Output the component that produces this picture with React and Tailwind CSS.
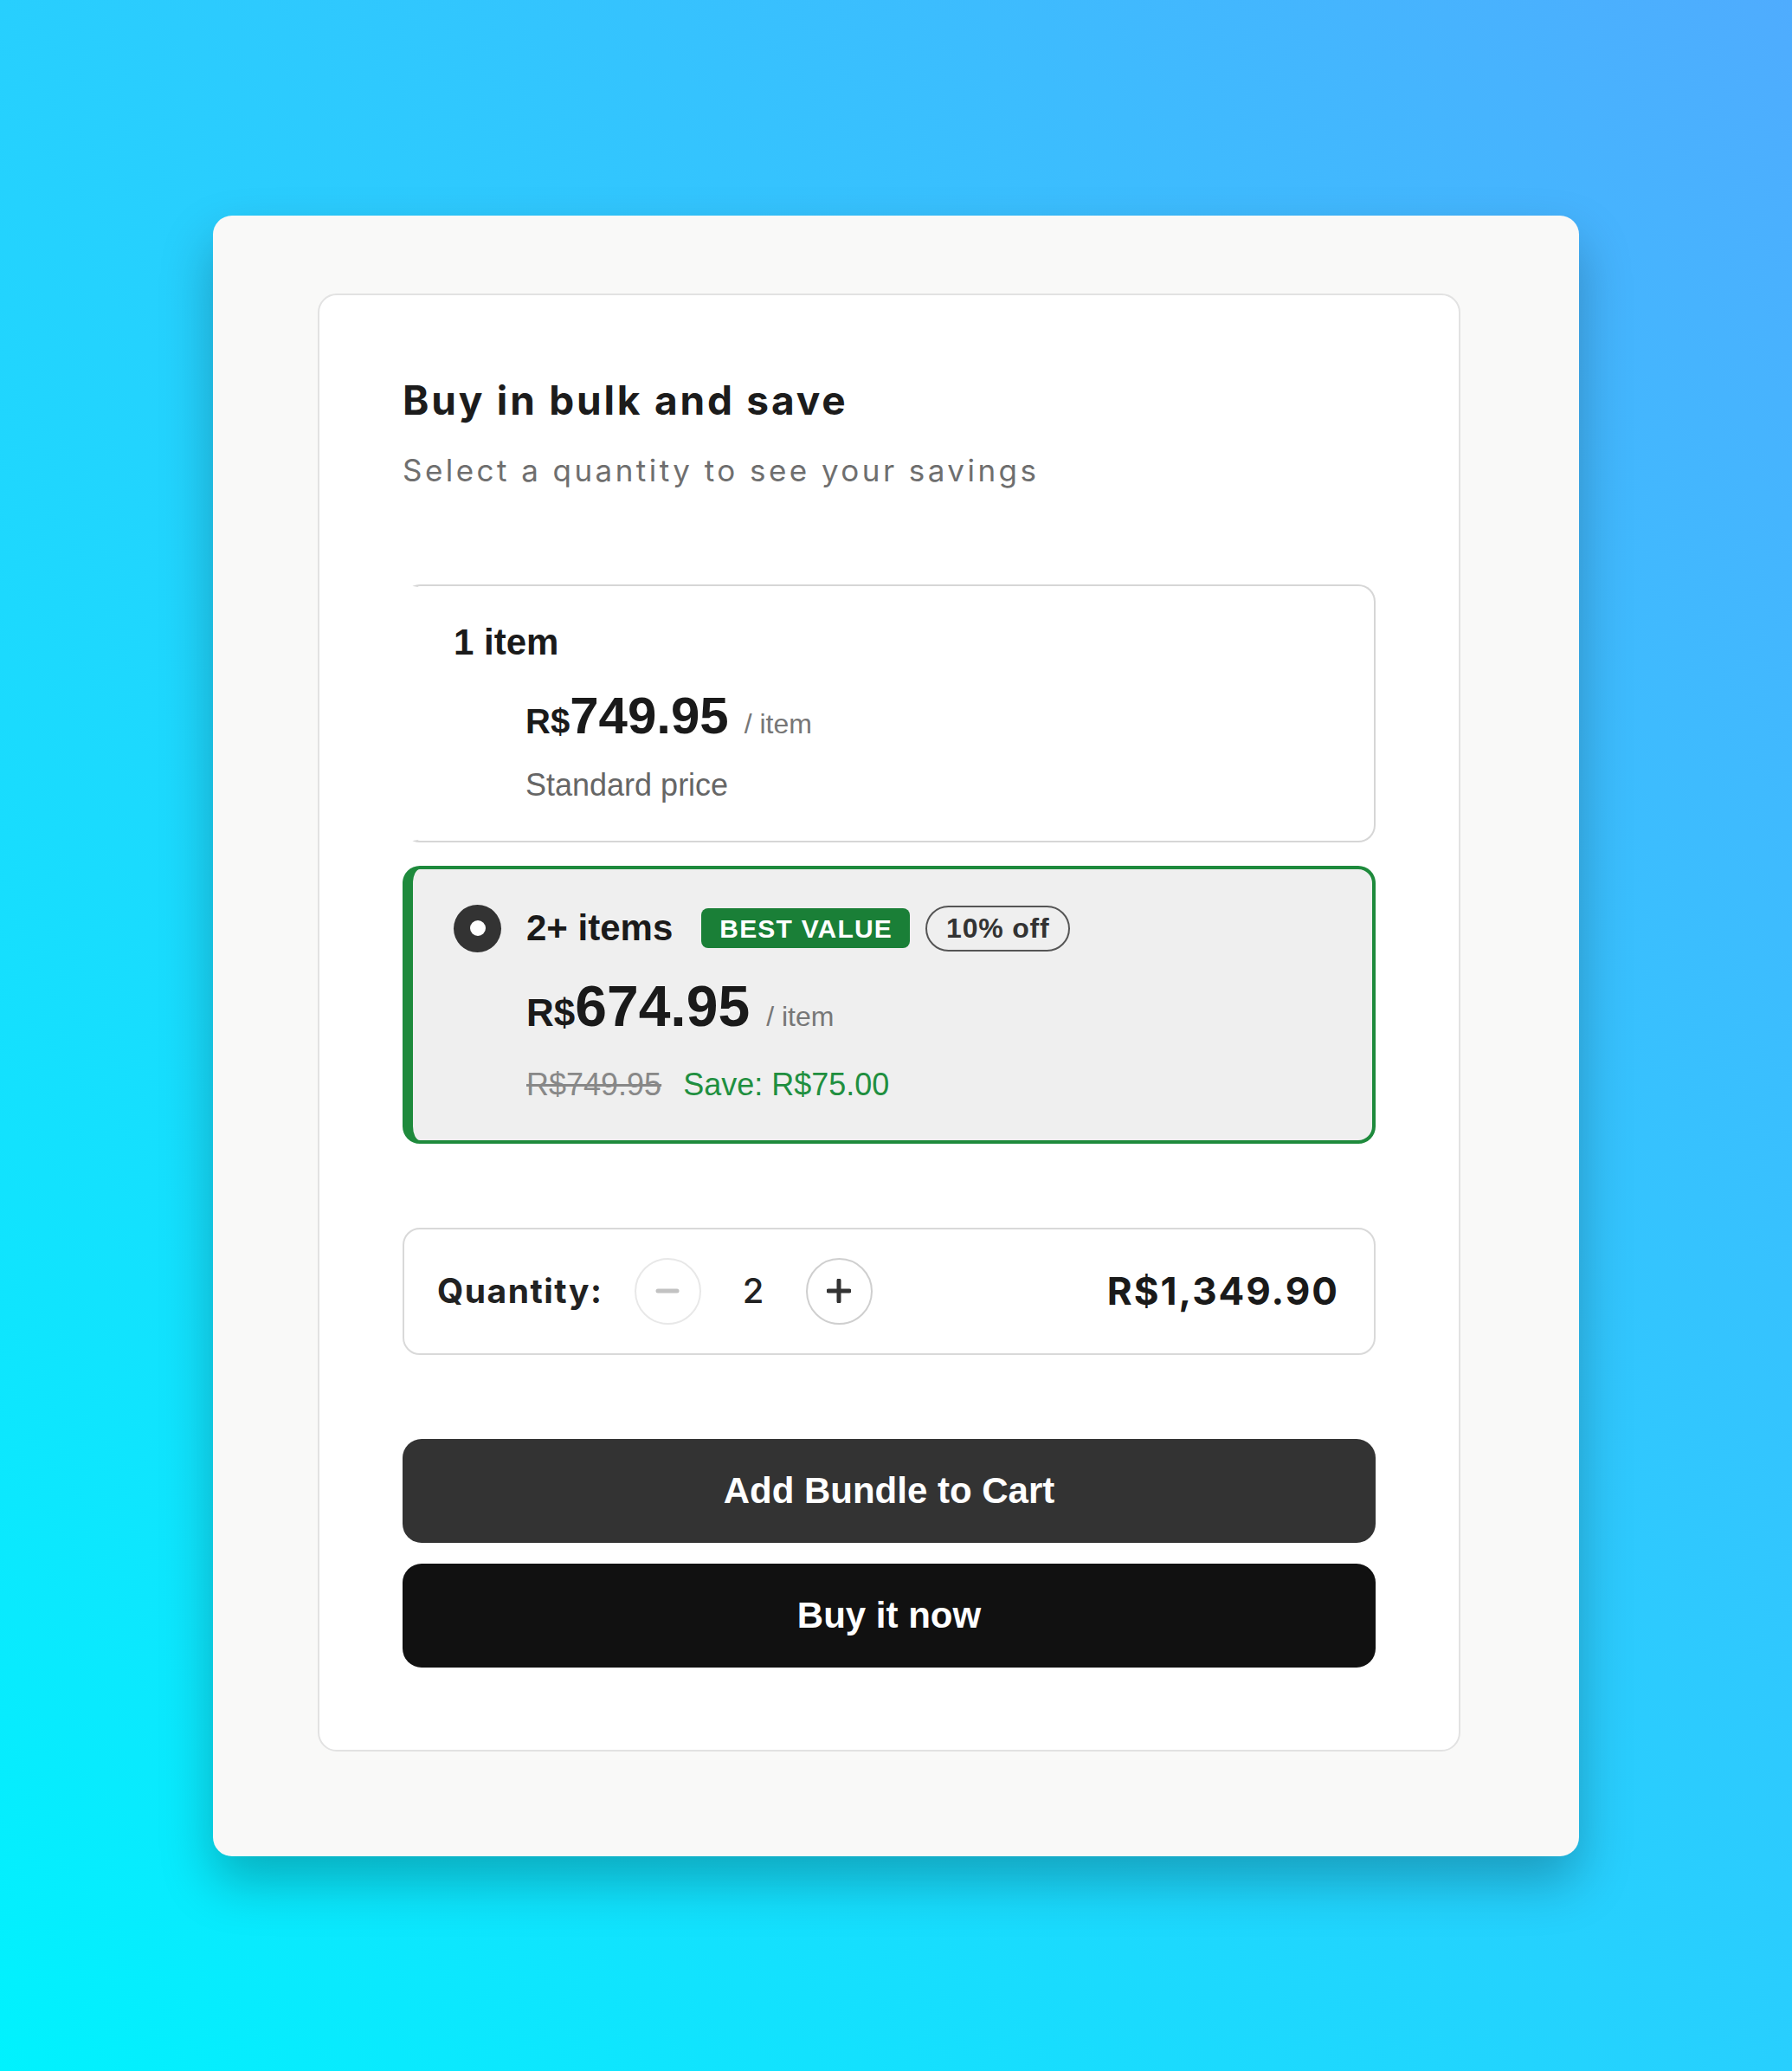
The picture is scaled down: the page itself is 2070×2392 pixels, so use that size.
export default function App() {
  return (
    <div className="min-h-screen w-full flex items-center justify-center bg-[linear-gradient(to_top_right,#00f2fe,#4facfe)] font-['Liberation_Sans',Arial,sans-serif]">
      <div className="w-[1578px] rounded-[22px] bg-[#f9f9f8] pt-[90px] pb-[121px] pl-[121px] shadow-[0_30px_60px_rgba(0,0,0,0.25)]">
        <div className="w-[1320px] rounded-[22px] border-2 border-[#e2e2e2] bg-white px-[96px] pt-[94px] pb-[95px]">
          <h2 className="font-['Inter',sans-serif] text-[46px] leading-[55px] font-bold tracking-[2.8px] text-[#1c1c1c]">
            Buy in bulk and save
          </h2>
          <p className="mt-[33px] font-['Inter',sans-serif] text-[35px] leading-[41px] tracking-[3.45px] text-[#6f6f6f]">
            Select a quantity to see your savings
          </p>

          {/* option 1 */}
          <div className="mt-[111px] rounded-[20px] border-2 border-l-[12px] border-[#d6d6d6] border-l-transparent bg-white pl-[47px] pt-[41px] pb-[43px]">
            <div className="text-[42px] leading-[48px] font-bold text-[#1a1a1a]">1 item</div>
            <div className="mt-[31px] ml-[83px] flex items-baseline leading-none text-[#1a1a1a]">
              <span className="text-[40px] font-bold">R$</span>
              <span className="text-[60px] font-bold">749.95</span>
              <span className="ml-[18px] text-[32px] text-[#777]">/ item</span>
            </div>
            <div className="mt-[29px] ml-[83px] text-[36px] leading-[42px] text-[#666]">Standard price</div>
          </div>

          {/* option 2 - selected */}
          <div className="mt-[27px] rounded-[20px] border-4 border-l-[12px] border-[#1e8a3c] bg-[#efefef] pl-[47px] pt-[41px] pb-[43px]">
            <div className="flex h-[55px] items-center">
              <span className="flex h-[55px] w-[55px] items-center justify-center rounded-full bg-[#333]">
                <span className="h-[18px] w-[18px] rounded-full bg-white" />
              </span>
              <span className="ml-[29px] text-[42px] leading-[48px] font-bold text-[#1a1a1a]">2+ items</span>
              <span className="ml-[33px] flex h-[46px] items-center rounded-[8px] bg-[#1a7f37] pl-[21px] pr-[20px] text-[30px] font-bold tracking-[1.2px] text-white">
                BEST VALUE
              </span>
              <span className="ml-[18px] flex h-[53px] items-center rounded-full border-2 border-[#555] pl-[22px] pr-[22px] text-[32px] font-bold tracking-[0.8px] text-[#333]">
                10% off
              </span>
            </div>
            <div className="mt-[29px] ml-[84px] flex items-baseline leading-none text-[#1a1a1a]">
              <span className="text-[44px] font-bold">R$</span>
              <span className="text-[66px] font-bold">674.95</span>
              <span className="ml-[19px] text-[32px] text-[#777]">/ item</span>
            </div>
            <div className="mt-[37px] ml-[84px] flex items-baseline text-[36px] leading-[42px]">
              <span className="text-[#888] line-through">R$749.95</span>
              <span className="ml-[25px] text-[#1f8f40]">Save: R$75.00</span>
            </div>
          </div>

          {/* quantity */}
          <div className="mt-[97px] flex h-[147px] items-center justify-between rounded-[20px] border-2 border-[#d9d9d9] pl-[38px] pr-[40px] font-['Inter',sans-serif]">
            <div className="flex items-center">
              <span className="text-[39px] font-bold tracking-[1.5px] text-[#222]">Quantity:</span>
              <button className="ml-[36px] flex h-[77px] w-[77px] items-center justify-center rounded-full border-2 border-[#e8e8e8] bg-white">
                <svg width="28" height="6" viewBox="0 0 28 6">
                  <path d="M3 3h22" stroke="#c2c2c2" strokeWidth="5" strokeLinecap="round" />
                </svg>
              </button>
              <span className="w-[121px] text-center text-[40px] font-medium text-[#222]">2</span>
              <button className="flex h-[77px] w-[77px] items-center justify-center rounded-full border-2 border-[#cfcfcf] bg-white">
                <svg width="28" height="28" viewBox="0 0 28 28">
                  <path d="M14 2v24M2 14h24" stroke="#333" strokeWidth="5" strokeLinecap="round" />
                </svg>
              </button>
            </div>
            <span className="text-[44px] font-bold tracking-[2px] text-[#1a1a1a]">R$1,349.90</span>
          </div>

          <button className="mt-[97px] flex h-[120px] w-full items-center justify-center rounded-[22px] bg-[#333] text-[42px] font-bold text-white">
            Add Bundle to Cart
          </button>
          <button className="mt-[24px] flex h-[120px] w-full items-center justify-center rounded-[22px] bg-[#111] text-[42px] font-bold text-white">
            Buy it now
          </button>
        </div>
      </div>
    </div>
  );
}
